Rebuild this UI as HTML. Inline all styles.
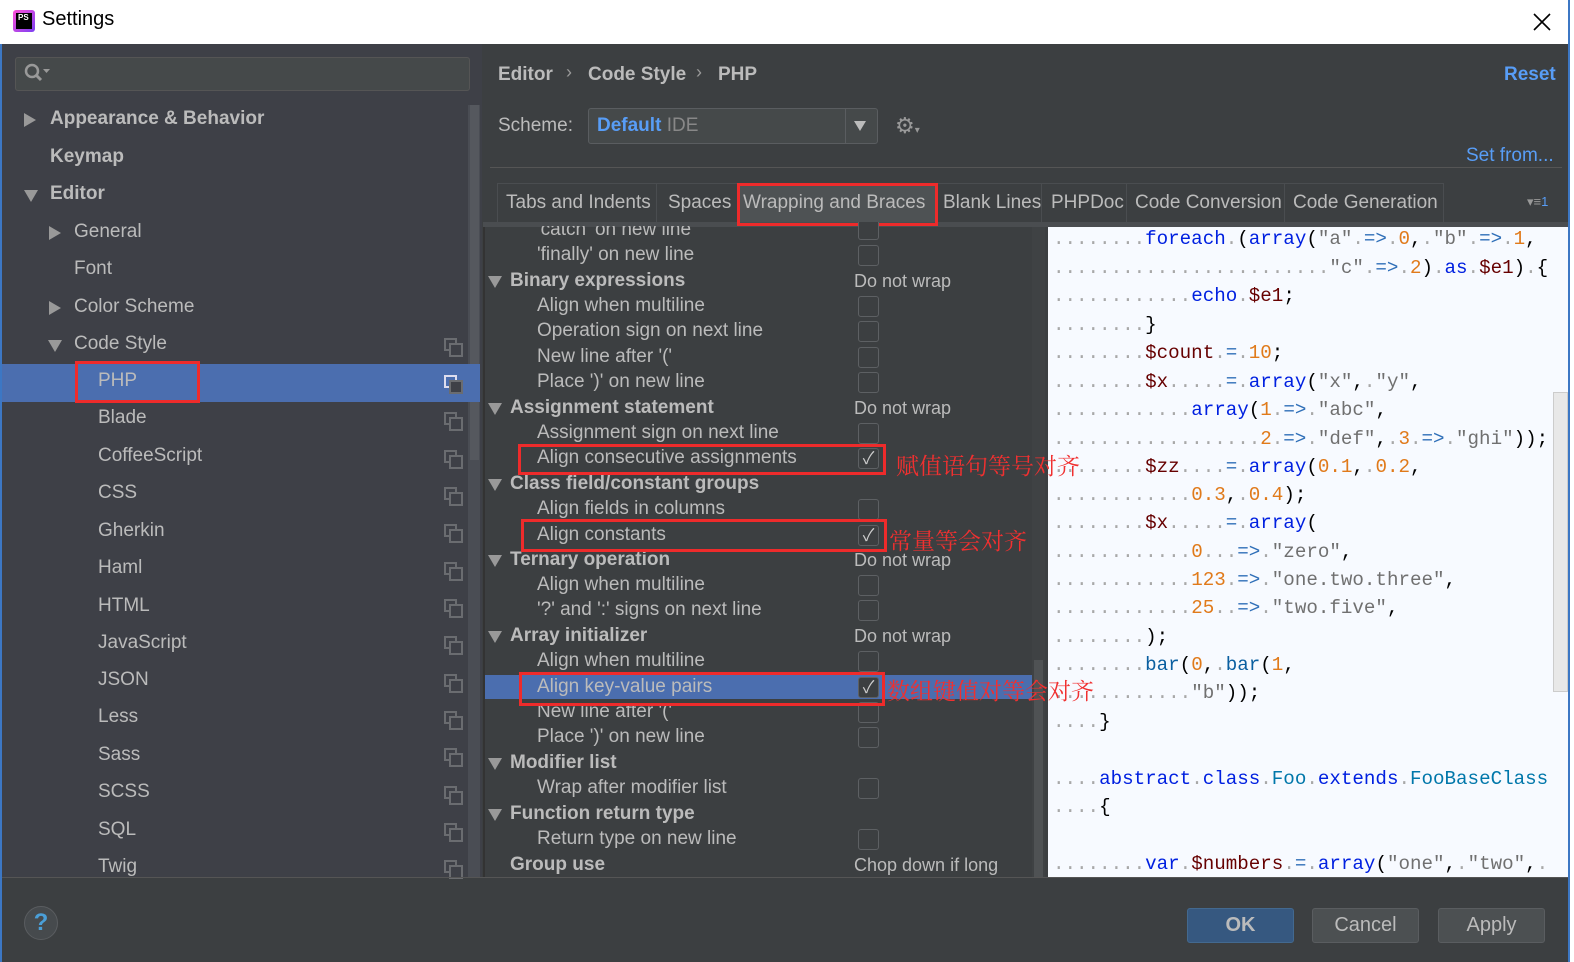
<!DOCTYPE html>
<html><head><meta charset="utf-8"><style>
*{margin:0;padding:0;box-sizing:border-box}
body{width:1574px;height:962px;overflow:hidden;background:#3c3f41;font-family:"Liberation Sans","Noto Sans CJK SC",sans-serif;position:relative;color:#bbbbbb}
.a{position:absolute;white-space:nowrap}
.tree{font-size:19px;color:#bbbbbb}
.b{font-weight:bold}
.tri{position:absolute;width:0;height:0;border-style:solid}
.tr{border-width:7px 0 7px 12px;border-color:transparent transparent transparent #999}
.td{border-width:12px 7px 0 7px;border-color:#999 transparent transparent transparent}
.ic{position:absolute;width:13px;height:13px;border:2px solid #6a6c70}
.ic:after{content:"";position:absolute;left:3px;top:3px;width:10px;height:10px;border:2px solid #6a6c70;background:#3e4047}
.opt{font-size:19px;color:#bbbbbb}
.cb{position:absolute;width:21px;height:21px;border:1px solid #5d6063;border-radius:3px;background:#3c3f41;left:858px}
.red{position:absolute;border:3px solid #ee2b2b}
.cn{position:absolute;color:#f03030;font-family:"Noto Serif CJK SC",serif;font-size:23px;white-space:nowrap}
.code{position:absolute;left:1053px;font-family:"Liberation Mono",monospace;font-size:19.2px;color:#000;white-space:pre}
.d{color:#a8a8a8}.k{color:#0020e0}.v{color:#660000}.n{color:#e07a1a}.s{color:#707070}.o{color:#2f6fb8}.f{color:#0a5fa0}.c{color:#0077aa}
.btn{position:absolute;top:908px;height:35px;width:107px;border:1px solid #5a5d60;background:#4c5052;border-radius:3px;color:#bbbbbb;font-size:20px;text-align:center;line-height:33px}
</style></head><body>
<!-- title bar -->
<div class="a" style="left:0;top:0;width:1574px;height:44px;background:#fff"></div>
<div class="a" style="left:13px;top:10px;width:22px;height:22px;background:linear-gradient(135deg,#ff4fd8,#7b3ff2);border-radius:3px"></div>
<div class="a" style="left:16px;top:13px;width:16px;height:16px;background:#000;color:#fff;font-size:8px;font-weight:bold;padding-left:2px;line-height:10px">PS</div>
<div class="a" style="left:42px;top:8px;font-size:20px;color:#000">Settings</div>
<svg class="a" style="left:1532px;top:12px" width="20" height="20"><path d="M2 2L18 18M18 2L2 18" stroke="#000" stroke-width="1.6"/></svg>
<div class="a" style="left:0;top:44px;width:2px;height:918px;background:#3c77c4"></div>
<div class="a" style="left:1568px;top:0;width:2px;height:962px;background:#3c77c4"></div>
<div class="a" style="left:1570px;top:0;width:4px;height:962px;background:#fff"></div>

<!-- sidebar -->
<div class="a" style="left:2px;top:44px;width:480px;height:833px;background:#3e4047"></div>
<div class="a" style="left:15px;top:57px;width:455px;height:34px;background:#45494a;border:1px solid #555;border-radius:3px"></div>
<svg class="a" style="left:23px;top:62px" width="30" height="22"><circle cx="9" cy="9" r="6" stroke="#999" stroke-width="2.5" fill="none"/><path d="M13 13L18 18" stroke="#999" stroke-width="3"/><path d="M20 7h7l-3.5 4z" fill="#999"/></svg>
<div class="a" style="left:468px;top:105px;width:12px;height:772px;background:#4a4d54"></div>
<div class="a" style="left:470px;top:105px;width:9px;height:355px;background:#55585e"></div>
<div class="a" style="left:2px;top:364px;width:478px;height:38px;background:#4b6eaf"></div>

<div class="tri tr" style="left:24px;top:113px"></div><div class="a tree b" style="left:50px;top:108px">Appearance &amp; Behavior</div>
<div class="a tree b" style="left:50px;top:146px">Keymap</div>
<div class="tri td" style="left:24px;top:190px"></div><div class="a tree b" style="left:50px;top:183px">Editor</div>
<div class="tri tr" style="left:49px;top:226px"></div><div class="a tree" style="left:74px;top:221px">General</div>
<div class="a tree" style="left:74px;top:258px">Font</div>
<div class="tri tr" style="left:49px;top:301px"></div><div class="a tree" style="left:74px;top:296px">Color Scheme</div>
<div class="tri td" style="left:48px;top:340px"></div><div class="a tree" style="left:74px;top:333px">Code Style</div>
<div class="a tree" style="left:98px;top:370px">PHP</div>
<div class="a tree" style="left:98px;top:407px">Blade</div>
<div class="a tree" style="left:98px;top:445px">CoffeeScript</div>
<div class="a tree" style="left:98px;top:482px">CSS</div>
<div class="a tree" style="left:98px;top:520px">Gherkin</div>
<div class="a tree" style="left:98px;top:557px">Haml</div>
<div class="a tree" style="left:98px;top:595px">HTML</div>
<div class="a tree" style="left:98px;top:632px">JavaScript</div>
<div class="a tree" style="left:98px;top:669px">JSON</div>
<div class="a tree" style="left:98px;top:706px">Less</div>
<div class="a tree" style="left:98px;top:744px">Sass</div>
<div class="a tree" style="left:98px;top:781px">SCSS</div>
<div class="a tree" style="left:98px;top:819px">SQL</div>
<div class="a tree" style="left:98px;top:856px">Twig</div>
<div class="ic" style="left:444px;top:338px"></div>
<div class="ic" style="left:444px;top:375px;border-color:#dde"></div>
<div class="ic" style="left:444px;top:412px"></div>
<div class="ic" style="left:444px;top:450px"></div>
<div class="ic" style="left:444px;top:487px"></div>
<div class="ic" style="left:444px;top:524px"></div>
<div class="ic" style="left:444px;top:562px"></div>
<div class="ic" style="left:444px;top:599px"></div>
<div class="ic" style="left:444px;top:636px"></div>
<div class="ic" style="left:444px;top:674px"></div>
<div class="ic" style="left:444px;top:711px"></div>
<div class="ic" style="left:444px;top:748px"></div>
<div class="ic" style="left:444px;top:786px"></div>
<div class="ic" style="left:444px;top:823px"></div>
<div class="ic" style="left:444px;top:860px"></div>
<div class="red" style="left:75px;top:361px;width:125px;height:42px"></div>

<!-- header right -->
<div class="a b" style="left:498px;top:64px;font-size:19px;color:#bbb">Editor</div>
<div class="a" style="left:566px;top:62px;font-size:18px;color:#999">›</div>
<div class="a b" style="left:588px;top:64px;font-size:19px;color:#bbb">Code Style</div>
<div class="a" style="left:696px;top:62px;font-size:18px;color:#999">›</div>
<div class="a b" style="left:718px;top:64px;font-size:19px;color:#bbb">PHP</div>
<div class="a b" style="left:1504px;top:64px;font-size:19px;color:#589df6">Reset</div>
<div class="a" style="left:498px;top:115px;font-size:19px">Scheme:</div>
<div class="a" style="left:588px;top:108px;width:290px;height:36px;border:1px solid #5a5d60;background:#45494a;border-radius:3px"></div>
<div class="a" style="left:845px;top:108px;width:1px;height:36px;background:#5a5d60"></div>
<div class="a" style="left:597px;top:115px;font-size:19px"><b style="color:#589df6">Default</b> <span style="color:#888">IDE</span></div>
<div class="tri td" style="left:854px;top:121px;border-width:10px 6px 0 6px;border-color:#bbb transparent transparent transparent"></div>
<div class="a" style="left:895px;top:113px;font-size:22px;color:#999">⚙<span style="font-size:10px">▾</span></div>
<div class="a" style="left:1466px;top:145px;font-size:19px;color:#589df6">Set from...</div>
<div class="a" style="left:490px;top:167px;width:1072px;height:1px;background:#555"></div>

<!-- tabs -->
<div class="a" style="left:497px;top:183px;width:947px;height:40px;border:1px solid #4a4d50"></div>
<div class="a" style="left:738px;top:184px;width:199px;height:40px;background:#4e5254"></div>
<div class="a" style="left:656px;top:184px;width:1px;height:38px;background:#4a4d50"></div>
<div class="a" style="left:1041px;top:184px;width:1px;height:38px;background:#4a4d50"></div>
<div class="a" style="left:1126px;top:184px;width:1px;height:38px;background:#4a4d50"></div>
<div class="a" style="left:1284px;top:184px;width:1px;height:38px;background:#4a4d50"></div>
<div class="a" style="left:483px;top:222px;width:1085px;height:5px;background:#4a4d50"></div>
<div class="a" style="left:506px;top:192px;font-size:19px">Tabs and Indents</div>
<div class="a" style="left:668px;top:192px;font-size:19px">Spaces</div>
<div class="a" style="left:743px;top:192px;font-size:19px">Wrapping and Braces</div>
<div class="a" style="left:943px;top:192px;font-size:19px">Blank Lines</div>
<div class="a" style="left:1051px;top:192px;font-size:19px">PHPDoc</div>
<div class="a" style="left:1135px;top:192px;font-size:19px">Code Conversion</div>
<div class="a" style="left:1293px;top:192px;font-size:19px">Code Generation</div>
<div class="a" style="left:1527px;top:194px;font-size:13px;color:#999">▾≡<span style="color:#589df6">1</span></div>
<div class="red" style="left:737px;top:183px;width:201px;height:43px"></div>

<!-- options -->
<div class="a" style="left:483px;top:227px;width:549px;height:650px;background:#3c3f41;overflow:hidden">
<div class="a" style="left:0;top:448px;width:549px;height:24px;background:#4b6eaf"></div>
</div>
<div class="a" style="left:1032px;top:227px;width:13px;height:650px;background:#3f4244"></div>
<div class="a" style="left:1034px;top:660px;width:9px;height:217px;background:#4f5254"></div>
<div class="a" style="left:483px;top:227px;width:2px;height:650px;background:#333"></div>

<div class="a opt" style="left:537px;top:219px;clip-path:inset(7px 0 0 0)">'catch' on new line</div><div class="cb" style="top:222px;height:18px;border-top:none;border-radius:0 0 3px 3px"></div>
<div class="a opt" style="left:537px;top:244px">'finally' on new line</div><div class="cb" style="top:245px"></div>
<div class="tri td" style="left:488px;top:276px"></div><div class="a opt b" style="left:510px;top:270px">Binary expressions</div><div class="a opt" style="left:854px;top:271px;font-size:18px">Do not wrap</div>
<div class="a opt" style="left:537px;top:295px">Align when multiline</div><div class="cb" style="top:296px"></div>
<div class="a opt" style="left:537px;top:320px">Operation sign on next line</div><div class="cb" style="top:321px"></div>
<div class="a opt" style="left:537px;top:346px">New line after '('</div><div class="cb" style="top:347px"></div>
<div class="a opt" style="left:537px;top:371px">Place ')' on new line</div><div class="cb" style="top:372px"></div>
<div class="tri td" style="left:488px;top:403px"></div><div class="a opt b" style="left:510px;top:397px">Assignment statement</div><div class="a opt" style="left:854px;top:398px;font-size:18px">Do not wrap</div>
<div class="a opt" style="left:537px;top:422px">Assignment sign on next line</div><div class="cb" style="top:423px"></div>
<div class="a opt" style="left:537px;top:447px">Align consecutive assignments</div><div class="cb" style="top:448px;color:#ccc;font-size:17px;text-align:center;line-height:19px">✓</div>
<div class="tri td" style="left:488px;top:479px"></div><div class="a opt b" style="left:510px;top:473px">Class field/constant groups</div>
<div class="a opt" style="left:537px;top:498px">Align fields in columns</div><div class="cb" style="top:499px"></div>
<div class="a opt" style="left:537px;top:524px">Align constants</div><div class="cb" style="top:525px;color:#ccc;font-size:17px;text-align:center;line-height:19px">✓</div>
<div class="tri td" style="left:488px;top:555px"></div><div class="a opt b" style="left:510px;top:549px">Ternary operation</div><div class="a opt" style="left:854px;top:550px;font-size:18px">Do not wrap</div>
<div class="a opt" style="left:537px;top:574px">Align when multiline</div><div class="cb" style="top:575px"></div>
<div class="a opt" style="left:537px;top:599px">'?' and ':' signs on next line</div><div class="cb" style="top:600px"></div>
<div class="tri td" style="left:488px;top:631px"></div><div class="a opt b" style="left:510px;top:625px">Array initializer</div><div class="a opt" style="left:854px;top:626px;font-size:18px">Do not wrap</div>
<div class="a opt" style="left:537px;top:650px">Align when multiline</div><div class="cb" style="top:651px"></div>
<div class="a opt" style="left:537px;top:676px">Align key-value pairs</div><div class="cb" style="top:677px;color:#ccc;font-size:17px;text-align:center;line-height:19px;background:#3c3f41">✓</div>
<div class="a opt" style="left:537px;top:701px">New line after '('</div><div class="cb" style="top:702px"></div>
<div class="a opt" style="left:537px;top:726px">Place ')' on new line</div><div class="cb" style="top:727px"></div>
<div class="tri td" style="left:488px;top:758px"></div><div class="a opt b" style="left:510px;top:752px">Modifier list</div>
<div class="a opt" style="left:537px;top:777px">Wrap after modifier list</div><div class="cb" style="top:778px"></div>
<div class="tri td" style="left:488px;top:809px"></div><div class="a opt b" style="left:510px;top:803px">Function return type</div>
<div class="a opt" style="left:537px;top:828px">Return type on new line</div><div class="cb" style="top:829px"></div>
<div class="a opt b" style="left:510px;top:854px">Group use</div><div class="a opt" style="left:854px;top:855px;font-size:18px">Chop down if long</div>

<!-- code preview -->
<div class="a" style="left:1048px;top:227px;width:520px;height:650px;background:#f7faff;overflow:hidden">
<div class="a" style="left:505px;top:165px;width:15px;height:300px;background:#e8e8e8;border:1px solid #ccc"></div>
</div>
<div class="code" style="top:228px"><span class="d">........</span><span class="k">foreach</span><span class="d">.</span>(<span class="k">array</span>(<span class="s">"a"</span><span class="d">.</span><span class="o">=&gt;</span><span class="d">.</span><span class="n">0</span>,<span class="d">.</span><span class="s">"b"</span><span class="d">.</span><span class="o">=&gt;</span><span class="d">.</span><span class="n">1</span>,</div>
<div class="code" style="top:257px"><span class="d">........................</span><span class="s">"c"</span><span class="d">.</span><span class="o">=&gt;</span><span class="d">.</span><span class="n">2</span>)<span class="d">.</span><span class="k">as</span><span class="d">.</span><span class="v">$e1</span>)<span class="d">.</span>{</div>
<div class="code" style="top:285px"><span class="d">............</span><span class="k">echo</span><span class="d">.</span><span class="v">$e1</span>;</div>
<div class="code" style="top:314px"><span class="d">........</span>}</div>
<div class="code" style="top:342px"><span class="d">........</span><span class="v">$count</span><span class="d">.</span><span class="o">=</span><span class="d">.</span><span class="n">10</span>;</div>
<div class="code" style="top:371px"><span class="d">........</span><span class="v">$x</span><span class="d">.....</span><span class="o">=</span><span class="d">.</span><span class="k">array</span>(<span class="s">"x"</span>,<span class="d">.</span><span class="s">"y"</span>,</div>
<div class="code" style="top:399px"><span class="d">............</span><span class="k">array</span>(<span class="n">1</span><span class="d">.</span><span class="o">=&gt;</span><span class="d">.</span><span class="s">"abc"</span>,</div>
<div class="code" style="top:428px"><span class="d">..................</span><span class="n">2</span><span class="d">.</span><span class="o">=&gt;</span><span class="d">.</span><span class="s">"def"</span>,<span class="d">.</span><span class="n">3</span><span class="d">.</span><span class="o">=&gt;</span><span class="d">.</span><span class="s">"ghi"</span>));</div>
<div class="code" style="top:456px"><span class="d">........</span><span class="v">$zz</span><span class="d">....</span><span class="o">=</span><span class="d">.</span><span class="k">array</span>(<span class="n">0.1</span>,<span class="d">.</span><span class="n">0.2</span>,</div>
<div class="code" style="top:484px"><span class="d">............</span><span class="n">0.3</span>,<span class="d">.</span><span class="n">0.4</span>);</div>
<div class="code" style="top:512px"><span class="d">........</span><span class="v">$x</span><span class="d">.....</span><span class="o">=</span><span class="d">.</span><span class="k">array</span>(</div>
<div class="code" style="top:541px"><span class="d">............</span><span class="n">0</span><span class="d">...</span><span class="o">=&gt;</span><span class="d">.</span><span class="s">"zero"</span>,</div>
<div class="code" style="top:569px"><span class="d">............</span><span class="n">123</span><span class="d">.</span><span class="o">=&gt;</span><span class="d">.</span><span class="s">"one.two.three"</span>,</div>
<div class="code" style="top:597px"><span class="d">............</span><span class="n">25</span><span class="d">..</span><span class="o">=&gt;</span><span class="d">.</span><span class="s">"two.five"</span>,</div>
<div class="code" style="top:626px"><span class="d">........</span>);</div>
<div class="code" style="top:654px"><span class="d">........</span><span class="f">bar</span>(<span class="n">0</span>,<span class="d">.</span><span class="f">bar</span>(<span class="n">1</span>,</div>
<div class="code" style="top:682px"><span class="d">............</span><span class="s">"b"</span>));</div>
<div class="code" style="top:711px"><span class="d">....</span>}</div>
<div class="code" style="top:768px"><span class="d">....</span><span class="k">abstract</span><span class="d">.</span><span class="k">class</span><span class="d">.</span><span class="c">Foo</span><span class="d">.</span><span class="k">extends</span><span class="d">.</span><span class="c">FooBaseClass</span></div>
<div class="code" style="top:796px"><span class="d">....</span>{</div>
<div class="code" style="top:853px"><span class="d">........</span><span class="k">var</span><span class="d">.</span><span class="v">$numbers</span><span class="d">.</span><span class="o">=</span><span class="d">.</span><span class="k">array</span>(<span class="s">"one"</span>,<span class="d">.</span><span class="s">"two"</span>,<span class="d">.</span></div>

<!-- red annotations -->
<div class="red" style="left:518px;top:444px;width:368px;height:31px"></div>
<div class="red" style="left:521px;top:519px;width:366px;height:33px"></div>
<div class="red" style="left:519px;top:672px;width:366px;height:34px"></div>
<div class="cn" style="left:896px;top:448px">赋值语句等号对齐</div>
<div class="cn" style="left:889px;top:523px">常量等会对齐</div>
<div class="cn" style="left:887px;top:673px">数组键值对等会对齐</div>

<!-- bottom -->
<div class="a" style="left:2px;top:877px;width:1566px;height:1px;background:#555"></div>
<div class="a" style="left:24px;top:906px;width:34px;height:34px;border-radius:50%;background:#464a4d;border:1px solid #5a5d60;color:#4a9fd8;font-size:24px;font-weight:bold;text-align:center;line-height:32px">?</div>
<div class="btn" style="left:1187px;background:#365880;border-color:#43698f;font-weight:bold">OK</div>
<div class="btn" style="left:1312px">Cancel</div>
<div class="btn" style="left:1438px">Apply</div>
</body></html>
